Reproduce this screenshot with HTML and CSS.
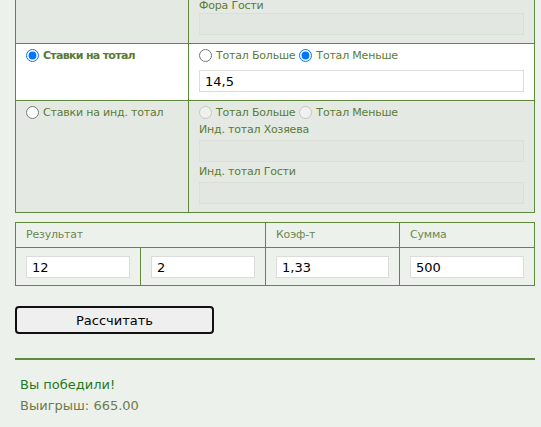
FILE: index.html
```html
<!DOCTYPE html>
<html lang="ru">
<head>
  <meta charset="UTF-8" />
  <meta name="viewport" content="width=device-width, initial-scale=1.0" />
  <title>Калькулятор ставок</title>
  <link rel="stylesheet" href="styles.css">
</head>
<body>
  <table class="bet-table">
    <colgroup>
      <col class="col-type">
      <col>
    </colgroup>
    <tr class="row-off row-cut">
      <td class="type-cell"></td>
      <td class="opt-cell">
        <label class="field-label">Фора Гости</label>
        <input class="field" type="text" disabled>
      </td>
    </tr>
    <tr class="row-on">
      <td class="type-cell">
        <label class="type-label active"><input type="radio" name="bet" checked>Ставки на тотал</label>
      </td>
      <td class="opt-cell">
        <div class="choice">
          <label><input type="radio" name="total">Тотал Больше</label>
          <label><input type="radio" name="total" checked>Тотал Меньше</label>
        </div>
        <input class="field" type="text" value="14,5">
      </td>
    </tr>
    <tr class="row-off">
      <td class="type-cell">
        <label class="type-label"><input type="radio" name="bet">Ставки на инд. тотал</label>
      </td>
      <td class="opt-cell">
        <div class="choice">
          <label><input type="radio" name="ind" disabled>Тотал Больше</label>
          <label><input type="radio" name="ind" disabled>Тотал Меньше</label>
        </div>
        <label class="field-label">Инд. тотал Хозяева</label>
        <input class="field" type="text" disabled>
        <label class="field-label">Инд. тотал Гости</label>
        <input class="field" type="text" disabled>
      </td>
    </tr>
  </table>

  <table class="result-table">
    <colgroup>
      <col class="col-a">
      <col class="col-b">
      <col class="col-c">
      <col>
    </colgroup>
    <tr>
      <th colspan="2">Результат</th>
      <th>Коэф-т</th>
      <th>Сумма</th>
    </tr>
    <tr>
      <td><input class="field" type="text" value="12"></td>
      <td><input class="field" type="text" value="2"></td>
      <td><input class="field" type="text" value="1,33"></td>
      <td><input class="field" type="text" value="500"></td>
    </tr>
  </table>

  <button class="calc-btn" type="button">Рассчитать</button>

  <hr class="divider">

  <div class="outcome">
    <div class="win">Вы победили!</div>
    <div class="payout">Выигрыш: 665.00</div>
  </div>
</body>
</html>
```

FILE: styles.css
```css
:root {
  --page-bg: #edf1ec;
  --row-off: #e5e9e3;
  --line: #5f8a3c;
  --label: #5b7b35;
  --head: #6a8752;
}

* {
  box-sizing: border-box;
  font-family: 'DejaVu Sans', Verdana, sans-serif;
}

body {
  margin: 0;
  padding: 0 0 0 15px;
  background: var(--page-bg);
  color: var(--label);
  font-size: 11px;
}

/* bet type table */
.bet-table {
  width: 520px;
  table-layout: fixed;
  border-collapse: collapse;
}

.col-type {
  width: 173px;
}

.bet-table td {
  border: 1px solid var(--line);
  padding: 5px 10px 5px;
  vertical-align: top;
}

.row-cut td {
  border-top: none;
  padding-top: 1px;
}

.row-cut .field-label {
  line-height: 10px;
  margin-bottom: 2px;
}

.row-on td {
  background: #fff;
}

.row-off td {
  background: var(--row-off);
}

.type-label,
.choice label {
  display: inline-flex;
  align-items: center;
  height: 13px;
  line-height: 13px;
  white-space: nowrap;
  letter-spacing: -0.2px;
}

.type-label.active {
  font-weight: bold;
  letter-spacing: -0.7px;
}

input[type="radio"] {
  margin: 0 4px 0 0;
  width: 13px;
  height: 13px;
}

.choice {
  display: flex;
  gap: 4px;
  height: 13px;
  margin-bottom: 4px;
}

.choice + .field {
  margin-top: 8px;
}

.field-label {
  display: block;
  line-height: 14px;
  margin-bottom: 3px;
  letter-spacing: -0.2px;
}

.field {
  display: block;
  width: 100%;
  height: 22px;
  margin: 0 0 3px;
  padding: 0 5px;
  border: 1px solid #dcdcdc;
  background: #fff;
  color: #000;
  font-size: 13px;
  outline: none;
}

.field:disabled {
  background: #e3e7e1;
  border-color: #dadfd8;
}

/* result table */
.result-table {
  width: 520px;
  margin-top: 9px;
  table-layout: fixed;
  border-collapse: collapse;
}

.col-a,
.col-b {
  width: 125px;
}

.col-c {
  width: 134px;
}

.result-table th {
  border: 1px solid var(--line);
  padding: 5px 10px;
  line-height: 14px;
  text-align: left;
  font-weight: normal;
  color: var(--head);
  letter-spacing: -0.2px;
}

.result-table td {
  border: 1px solid var(--line);
  padding: 8px 10px 7px;
}

.result-table .field {
  margin: 0;
}

.calc-btn {
  display: block;
  width: 199px;
  height: 28px;
  margin-top: 20px;
  border: 2px solid #111;
  border-radius: 4px;
  background: #efefef;
  color: #000;
  font-size: 13px;
  cursor: pointer;
}

.divider {
  width: 520px;
  margin: 24px 0 0;
  border: none;
  border-top: 2px solid var(--line);
}

.outcome {
  margin-top: 14px;
  padding-left: 5px;
  font-size: 13px;
  line-height: 21px;
}

.win {
  color: #1f7a1f;
}

.payout {
  color: #6d7b4a;
}
```
